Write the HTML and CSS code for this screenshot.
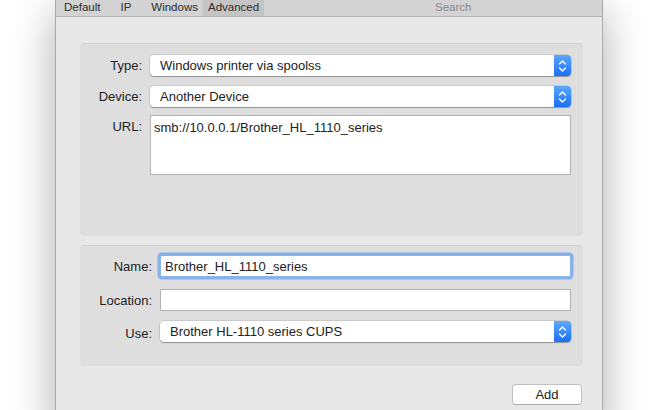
FILE: index.html
```html
<!DOCTYPE html>
<html>
<head>
<meta charset="utf-8">
<link rel="stylesheet" href="styles.css">
</head>
<body>
<div class="desk">
  <div class="window">
    <div class="toolbar">
      <div class="tabs">
        <span class="tab">Default</span>
        <span class="tab">IP</span>
        <span class="tab t-win">Windows</span>
        <span class="tab active">Advanced</span>
      </div>
      <div class="search">Search</div>
    </div>
    <div class="content">
      <section class="panel p1">
        <label class="lbl">Type:</label>
        <div class="select"><span class="val">Windows printer via spoolss</span><span class="stepper"><svg width="9" height="14" viewBox="0 0 9 14"><path d="M1.5 5 L4.5 2 L7.5 5" /><path d="M1.5 9 L4.5 12 L7.5 9" /></svg></span></div>
        <label class="lbl">Device:</label>
        <div class="select"><span class="val">Another Device</span><span class="stepper"><svg width="9" height="14" viewBox="0 0 9 14"><path d="M1.5 5 L4.5 2 L7.5 5" /><path d="M1.5 9 L4.5 12 L7.5 9" /></svg></span></div>
        <label class="lbl lbl-top">URL:</label>
        <div class="textarea">smb://10.0.0.1/Brother_HL_1110_series</div>
      </section>
      <section class="panel p2">
        <label class="lbl">Name:</label>
        <div class="field focus">Brother_HL_1110_series</div>
        <label class="lbl">Location:</label>
        <div class="field"></div>
        <label class="lbl">Use:</label>
        <div class="select"><span class="val">Brother HL-1110 series CUPS</span><span class="stepper"><svg width="9" height="14" viewBox="0 0 9 14"><path d="M1.5 5 L4.5 2 L7.5 5" /><path d="M1.5 9 L4.5 12 L7.5 9" /></svg></span></div>
      </section>
      <div class="actions">
        <button class="btn">Add</button>
      </div>
    </div>
  </div>
</div>
</body>
</html>
```

FILE: styles.css
```css
html, body {
  margin: 0;
  padding: 0;
  background: #ffffff;
  width: 659px;
  height: 410px;
  overflow: hidden;
  font-family: "Liberation Sans", Arial, sans-serif;
  font-size: 13px;
  color: #222222;
}

.desk {
  padding-left: 55px;
  height: 410px;
}

.window {
  width: 546px;
  height: 430px;
  background: #e8e8e8;
  border-left: 1px solid #a9a9a9;
  border-right: 1px solid #a9a9a9;
  box-shadow: 0 12px 40px rgba(0, 0, 0, 0.32);
}

.toolbar {
  height: 16px;
  background: #d3d3d3;
  border-bottom: 1px solid #b4b4b4;
  display: flex;
  align-items: stretch;
  font-size: 11.5px;
  color: #2c2c2c;
}

.tabs {
  display: flex;
  padding-left: 3px;
  gap: 10px;
  width: 206px;
  flex: none;
}

.tab {
  display: flex;
  align-items: center;
  padding: 0 5px;
  line-height: 12px;
  margin-top: -2px;
  height: 18px;
  white-space: nowrap;
}
.t-win { margin-right: -10px; }
.active { background: #c4c4c4; }

.search {
  margin-left: 170px;
  color: #8a8a8a;
  display: flex;
  align-items: center;
  margin-top: -2px;
  height: 18px;
}

.content {
  padding: 26px 19px 0 24px;
}

.panel {
  background: #dedede;
  border-top: 1px solid #d2d2d2;
  border-radius: 4px;
  display: grid;
  align-items: center;
  box-sizing: border-box;
}

.p1 {
  height: 193px;
  grid-template-columns: 62px 421px;
  grid-template-rows: 21px 21px 60px;
  row-gap: 10px;
  column-gap: 8px;
  padding-top: 11px;
  align-content: start;
}
.p1 .textarea { margin-top: -2px; }

.p2 {
  margin-top: 9px;
  height: 121px;
  grid-template-columns: 72px 411px;
  grid-template-rows: 22px 22px 21px;
  row-gap: 12px;
  column-gap: 8px;
  padding-top: 9px;
  align-content: start;
}
.p2 .select { margin-top: -4px; }

.lbl {
  text-align: right;
  color: #222222;
}
.lbl-top {
  align-self: start;
  padding-top: 4px;
  margin-top: -2px;
}

.select {
  position: relative;
  height: 21px;
  background: #ffffff;
  border-radius: 4px;
  box-shadow: 0 0 0 0.5px rgba(0, 0, 0, 0.18), 0 1px 1px rgba(0, 0, 0, 0.28);
  display: flex;
  align-items: center;
}
.select .val {
  flex: 1;
  padding-left: 10px;
  white-space: nowrap;
}
.stepper {
  width: 17px;
  height: 21px;
  border-radius: 0 4px 4px 0;
  background: linear-gradient(#5ba7ff, #1b6ff5);
  display: flex;
  align-items: center;
  justify-content: center;
}
.stepper path {
  fill: none;
  stroke: #ffffff;
  stroke-width: 1.4;
  stroke-linecap: round;
  stroke-linejoin: round;
}

.textarea {
  box-sizing: border-box;
  height: 60px;
  background: #ffffff;
  border: 1px solid #b3b3b3;
  padding: 4px 3px;
  align-self: start;
}

.field {
  box-sizing: border-box;
  height: 22px;
  background: #ffffff;
  border: 1px solid #b3b3b3;
  padding: 0 4px;
  display: flex;
  align-items: center;
}
.field.focus {
  border-color: #8cb2e8;
  box-shadow: 0 0 0 2.5px #86b1ee;
  border-radius: 2px;
}

.actions {
  display: flex;
  justify-content: flex-end;
  padding-top: 18px;
  padding-right: 1px;
}

.btn {
  width: 70px;
  height: 21px;
  background: #ffffff;
  border: 1px solid #c0c0c0;
  border-bottom-color: #acacac;
  border-radius: 4px;
  font-family: "Liberation Sans", Arial, sans-serif;
  font-size: 13px;
  color: #222222;
  padding: 0;
}
```
